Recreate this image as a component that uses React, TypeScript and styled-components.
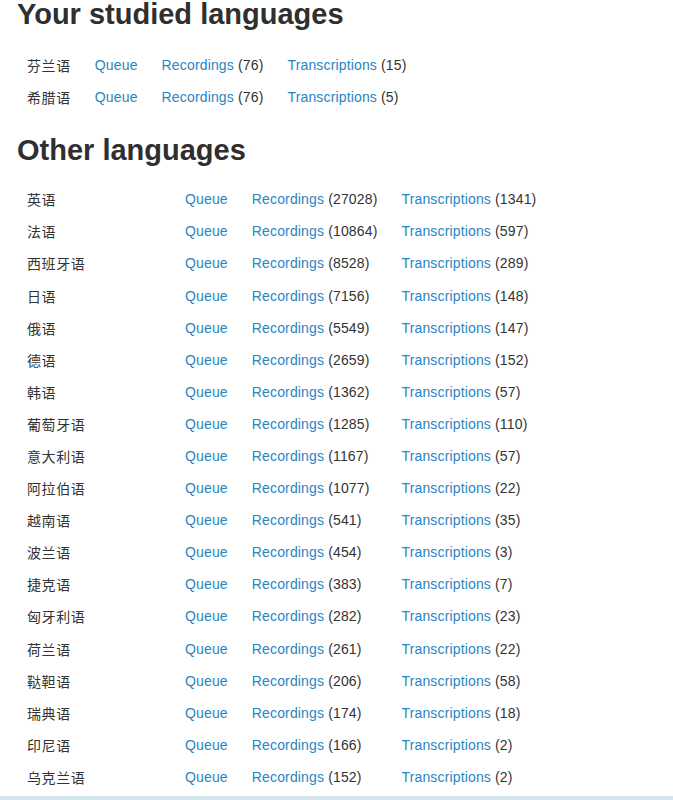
import React from "react";
import styled, { createGlobalStyle } from "styled-components";

const Global = createGlobalStyle`
  html, body { margin: 0; padding: 0; background: #ffffff; }
  body {
    font-family: "Liberation Sans", Arial, "Noto Sans CJK SC", sans-serif;
    font-size: 14px;
    line-height: 20px;
    color: #333333;
  }
`;

const Page = styled.div`
  padding: 0 15px;
  overflow: hidden;
`;

const Heading = styled.h2<{ $first?: boolean }>`
  font-family: "Liberation Sans", Arial, sans-serif;
  font-size: 29px;
  font-weight: 700;
  line-height: 33px;
  color: #2f2f2f;
  margin: ${(p) => (p.$first ? "-2px" : "21px")} 0 ${(p) => (p.$first ? "18px" : "16px")} 2px;
`;

const Table = styled.table`
  border-collapse: collapse;
  border-spacing: 0;
`;

const Cell = styled.td<{ $w?: number }>`
  padding: 6px 12px;
  height: 20.1px;
  line-height: 20px;
  white-space: nowrap;
  vertical-align: middle;
  letter-spacing: 0.15px;
  ${(p) => (p.$w ? `width: ${p.$w}px;` : "")}
`;

const LangName = styled.div`
  font-family: "Noto Sans CJK SC", "Liberation Sans", sans-serif;
  color: #333333;
  font-size: 14px;
  line-height: 20px;
  height: 20px;
  letter-spacing: 0.6px;
`;

const Link = styled.a`
  color: #2a85c2;
  text-decoration: none;
  cursor: pointer;
`;

const Count = styled.span`
  color: #333333;
`;

const Footer = styled.div`
  margin-top: 3px;
  height: 10px;
  background: #d6e6ef;
`;

type Lang = { name: string; rec: number; tr: number };

const studied: Lang[] = [
  { name: "芬兰语", rec: 76, tr: 15 },
  { name: "希腊语", rec: 76, tr: 5 },
];

const others: Lang[] = [
  { name: "英语", rec: 27028, tr: 1341 },
  { name: "法语", rec: 10864, tr: 597 },
  { name: "西班牙语", rec: 8528, tr: 289 },
  { name: "日语", rec: 7156, tr: 148 },
  { name: "俄语", rec: 5549, tr: 147 },
  { name: "德语", rec: 2659, tr: 152 },
  { name: "韩语", rec: 1362, tr: 57 },
  { name: "葡萄牙语", rec: 1285, tr: 110 },
  { name: "意大利语", rec: 1167, tr: 57 },
  { name: "阿拉伯语", rec: 1077, tr: 22 },
  { name: "越南语", rec: 541, tr: 35 },
  { name: "波兰语", rec: 454, tr: 3 },
  { name: "捷克语", rec: 383, tr: 7 },
  { name: "匈牙利语", rec: 282, tr: 23 },
  { name: "荷兰语", rec: 261, tr: 22 },
  { name: "鞑靼语", rec: 206, tr: 58 },
  { name: "瑞典语", rec: 174, tr: 18 },
  { name: "印尼语", rec: 166, tr: 2 },
  { name: "乌克兰语", rec: 152, tr: 2 },
];

function LangTable({ rows, firstWidth }: { rows: Lang[]; firstWidth?: number }) {
  return (
    <Table>
      <tbody>
        {rows.map((r) => (
          <tr key={r.name}>
            <Cell $w={firstWidth}>
              <LangName>{r.name}</LangName>
            </Cell>
            <Cell>
              <Link>Queue</Link>
            </Cell>
            <Cell>
              <Link>Recordings</Link> <Count>({r.rec})</Count>
            </Cell>
            <Cell>
              <Link>Transcriptions</Link> <Count>({r.tr})</Count>
            </Cell>
          </tr>
        ))}
      </tbody>
    </Table>
  );
}

export default function App() {
  return (
    <>
      <Global />
      <Page>
        <Heading $first>Your studied languages</Heading>
        <LangTable rows={studied} />
        <Heading>Other languages</Heading>
        <LangTable rows={others} firstWidth={134} />
      </Page>
      <Footer />
    </>
  );
}
